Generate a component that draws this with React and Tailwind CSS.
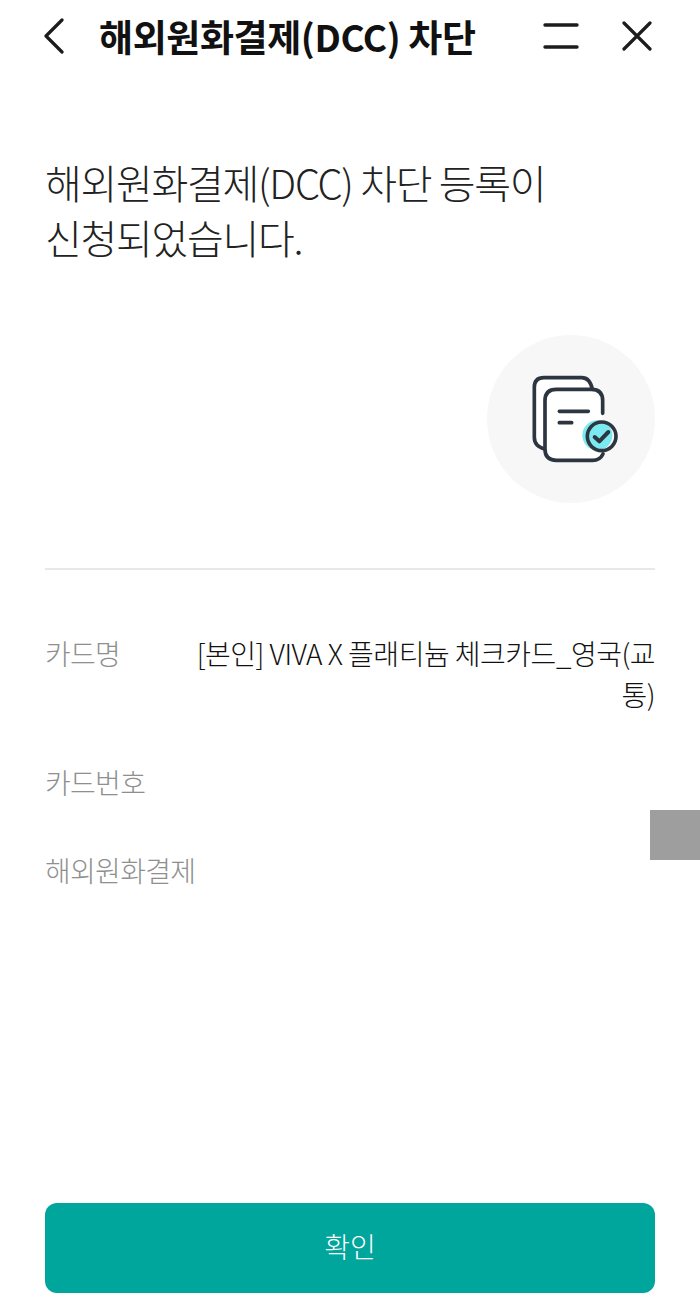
const font = { fontFamily: '"Noto Sans CJK KR", "Noto Sans", sans-serif' };

function DocIcon() {
  return (
    <svg width="100" height="100" viewBox="123 117 300 300" fill="none" stroke="#2d3540" strokeWidth="11" strokeLinecap="round" strokeLinejoin="round">
      <path d="M195 357Q163 350 163 322V172Q163 143 192 143H305Q330 143 337 178" fill="#fff" />
      <path d="M368 250V212Q368 178 334 178H229Q195 178 195 212V358Q195 391 229 391H338Q360 391 369 372" fill="#fff" />
      <path d="M238 244H325M238 278H275" />
      <circle cx="352" cy="316" r="45" fill="#7beaf0" stroke="none" />
      <circle cx="365" cy="319" r="43" />
      <path d="M344 321L358 334L385 306" strokeWidth="12" />
    </svg>
  );
}

function Row({ label, value, className }) {
  return (
    <div className={`flex justify-between ${className}`}>
      <div className="shrink-0 text-[#8f8f8f] font-light tracking-[-0.7px]">{label}</div>
      {value && <div className="w-[470px] text-right text-[#111] font-light tracking-[-0.5px]">{value}</div>}
    </div>
  );
}

export default function App() {
  return (
    <div className="relative h-[1310px] w-[700px] overflow-hidden bg-white" style={font}>
      <header className="flex h-[72px] items-center pl-[43px] pr-[48px]">
        <svg width="22" height="36" viewBox="0 0 22 36" fill="none" stroke="#1c1c1c" strokeWidth="3.2" strokeLinecap="round" strokeLinejoin="round">
          <path d="M19 2L3 18L19 34" />
        </svg>
        <h1 className="ml-[34px] flex-1 text-[37px] leading-[72px] font-bold tracking-[-0.4px] text-[#111]">해외원화결제(DCC) 차단</h1>
        <svg width="36" height="26" viewBox="0 0 36 26" fill="none" stroke="#1c1c1c" strokeWidth="3.4" strokeLinecap="round">
          <path d="M2 2H34M2 24H34" />
        </svg>
        <svg className="ml-[43px]" width="30" height="30" viewBox="0 0 30 30" fill="none" stroke="#1c1c1c" strokeWidth="3.2" strokeLinecap="round">
          <path d="M2 2L28 28M28 2L2 28" />
        </svg>
      </header>

      <main className="px-[45px]">
        <p className="mt-[83px] text-[40px] leading-[55px] font-light tracking-[-1.3px] text-[#222]">
          해외원화결제(DCC) 차단 등록이
          <br />
          신청되었습니다.
        </p>

        <div className="mt-[70px] flex justify-end">
          <div className="flex h-[168px] w-[168px] items-center justify-center rounded-full bg-[#f7f7f7]">
            <DocIcon />
          </div>
        </div>

        <div className="mt-[65px] h-[2px] bg-[#e8e8e8]" />

        <div className="mt-[63px] text-[28px] leading-[41px]">
          <Row label="카드명" value="[본인] VIVA X 플래티늄 체크카드_영국(교통)" />
          <Row label="카드번호" className="mt-[47px]" />
          <Row label="해외원화결제" className="mt-[47px]" />
        </div>
      </main>

      <div className="absolute right-0 top-[810px] h-[50px] w-[50px] bg-[#9e9e9e]" />

      <button className="absolute left-[45px] top-[1203px] flex h-[90px] w-[610px] items-center justify-center rounded-[12px] bg-[#00a59b] pb-[4px] text-[28px] font-light text-white">
        확인
      </button>
    </div>
  );
}
